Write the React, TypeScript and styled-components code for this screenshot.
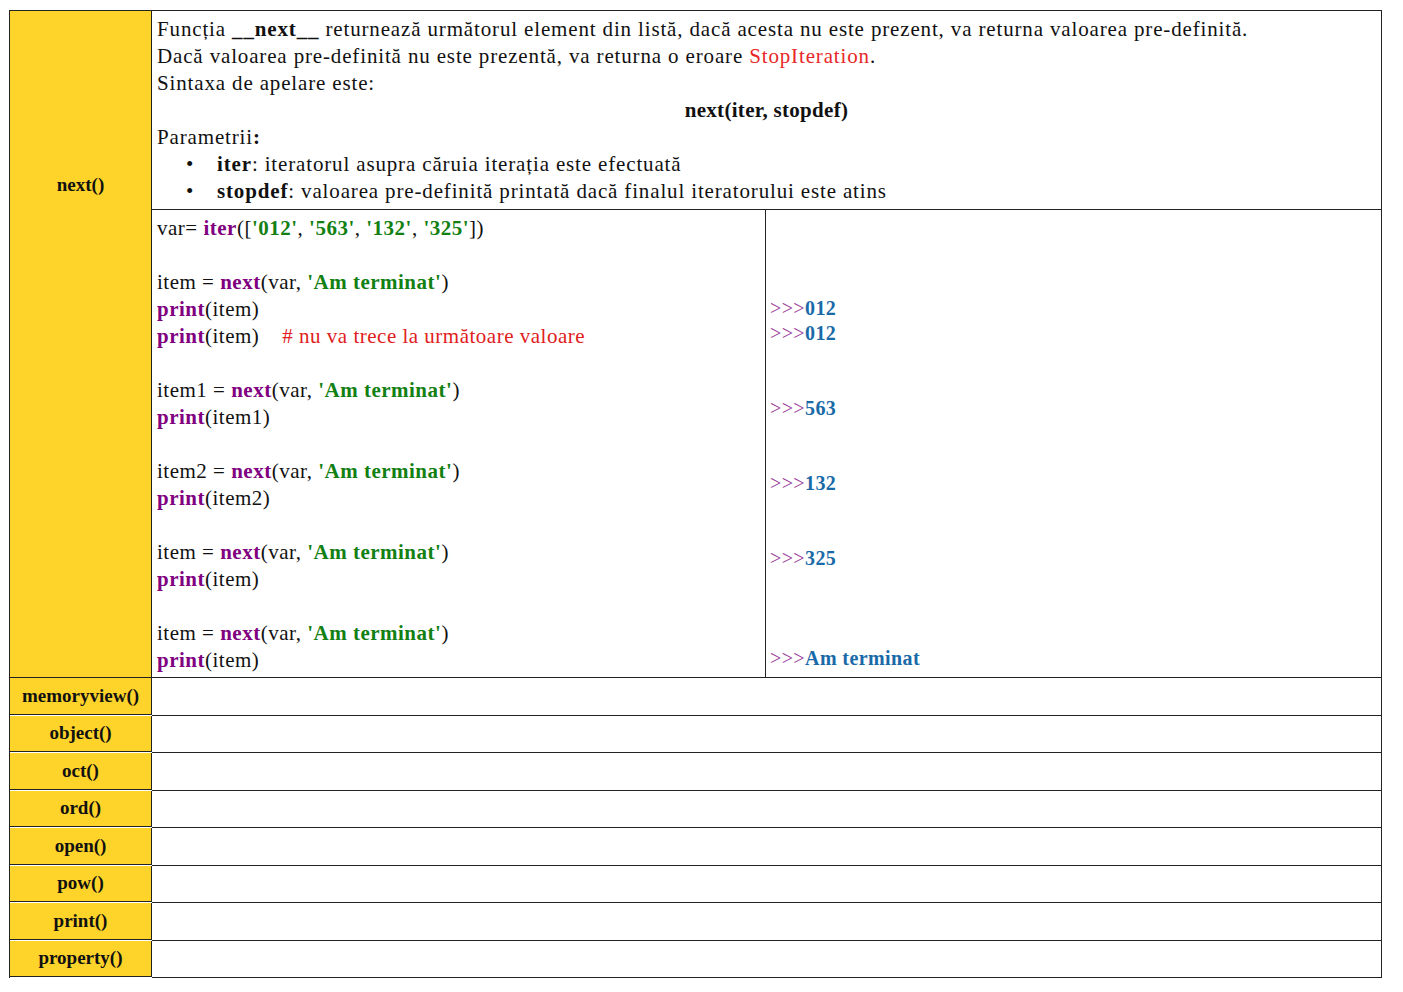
import * as React from 'react';
import styled, { createGlobalStyle } from 'styled-components';

const Global = createGlobalStyle`
    body {
        margin: 0;
        background: #fff;
        font-family: 'Liberation Serif', 'Times New Roman', serif;
        color: #111;
    }
`;

const Page = styled.div`
    padding: 10px 0 0 9px;
`;

const Table = styled.div`
    width: 1372px;
    display: grid;
    grid-template-columns: 142px 1fr;
    border-top: 1px solid #222;
    border-left: 1px solid #222;
`;

const Name = styled.div<{ $tall?: boolean }>`
    background: #ffd42a;
    border-right: 1px solid #222;
    border-bottom: 1px solid #222;
    display: flex;
    align-items: ${p => (p.$tall ? 'flex-start' : 'center')};
    padding-top: ${p => (p.$tall ? '163px' : '0')};
    justify-content: center;
    font-weight: bold;
    font-size: 19px;
    height: ${p => (p.$tall ? 'auto' : '36.5px')};
    box-sizing: border-box;
`;

const Cell = styled.div`
    border-right: 1px solid #222;
    border-bottom: 1px solid #222;
    background: #fff;
    min-height: 36.5px;
`;

const Desc = styled.div`
    padding: 5px 5px 4px;
    font-size: 21px;
    line-height: 27px;
    letter-spacing: 0.85px;
`;

const Center = styled.div`
    text-align: center;
    font-weight: bold;
    letter-spacing: 0.3px;
`;

const Bullets = styled.ul`
    margin: 0;
    padding-left: 60px;
    list-style: none;
    li { position: relative; }
    li::before {
        content: '•';
        position: absolute;
        left: -31px;
    }
`;

const Split = styled.div`
    display: grid;
    grid-template-columns: 614px 1fr;
`;

const Code = styled.div`
    border-right: 1px solid #222;
    padding: 5px 5px 3px;
    font-size: 21px;
    line-height: 27px;
    letter-spacing: 0.5px;
`;

const Out = styled.div`
    padding: 86px 4px 4px;
    font-size: 20px;
    line-height: 25px;
    letter-spacing: 0.4px;
`;

const Line = styled.div<{ $gap?: number }>`
    margin-top: ${p => (p.$gap || 0) * 25}px;
    min-height: 25px;
`;

const Blank = styled.div`
    height: 27px;
`;

const Kw = styled.b`color: #800080;`;
const Str = styled.b`color: #138013;`;
const Cmt = styled.span`color: #e02020;`;
const Red = styled.span`color: #e82828;`;
const Pr = styled.span`color: #9a3c9a;`;
const Val = styled.b`color: #1a6aa8;`;

const Next = ({ v, s = 'Am terminat' }: { v: string; s?: string }) => (
    <div>{v} = <Kw>next</Kw>(var, <Str>'{s}'</Str>)</div>
);

const Print = ({ v, c }: { v: string; c?: string }) => (
    <div><Kw>print</Kw>({v}){c && <>&nbsp;&nbsp;&nbsp;&nbsp;<Cmt>{c}</Cmt></>}</div>
);

const Output = ({ v, gap }: { v: string; gap?: number }) => (
    <Line $gap={gap}><Pr>&gt;&gt;&gt;</Pr><Val>{v}</Val></Line>
);

const others = ['memoryview()', 'object()', 'oct()', 'ord()', 'open()', 'pow()', 'print()', 'property()'];

const App = () => (
    <Page>
        <Global />
        <Table>
            <Name $tall style={{ gridRow: 'span 2' }}>next()</Name>
            <Cell>
                <Desc>
                    <div>Funcția <b>__next__</b> returnează următorul element din listă, dacă acesta nu este prezent, va returna valoarea pre-definită.</div>
                    <div>Dacă valoarea pre-definită nu este prezentă, va returna o eroare <Red>StopIteration</Red>.</div>
                    <div>Sintaxa de apelare este:</div>
                    <Center>next(iter, stopdef)</Center>
                    <div>Parametrii<b>:</b></div>
                    <Bullets>
                        <li><b>iter</b>: iteratorul asupra căruia iterația este efectuată</li>
                        <li><b>stopdef</b>: valoarea pre-definită printată dacă finalul iteratorului este atins</li>
                    </Bullets>
                </Desc>
            </Cell>
            <Cell>
                <Split>
                    <Code>
                        <div>var= <Kw>iter</Kw>([<Str>'012'</Str>, <Str>'563'</Str>, <Str>'132'</Str>, <Str>'325'</Str>])</div>
                        <Blank />
                        <Next v="item" />
                        <Print v="item" />
                        <Print v="item" c="# nu va trece la următoare valoare" />
                        <Blank />
                        <Next v="item1" />
                        <Print v="item1" />
                        <Blank />
                        <Next v="item2" />
                        <Print v="item2" />
                        <Blank />
                        <Next v="item" />
                        <Print v="item" />
                        <Blank />
                        <Next v="item" />
                        <Print v="item" />
                    </Code>
                    <Out>
                        <Output v="012" />
                        <Output v="012" />
                        <Output v="563" gap={2} />
                        <Output v="132" gap={2} />
                        <Output v="325" gap={2} />
                        <Output v="Am terminat" gap={3} />
                    </Out>
                </Split>
            </Cell>
            {others.map(n => (
                <React.Fragment key={n}>
                    <Name>{n}</Name>
                    <Cell />
                </React.Fragment>
            ))}
        </Table>
    </Page>
);

export default App;
